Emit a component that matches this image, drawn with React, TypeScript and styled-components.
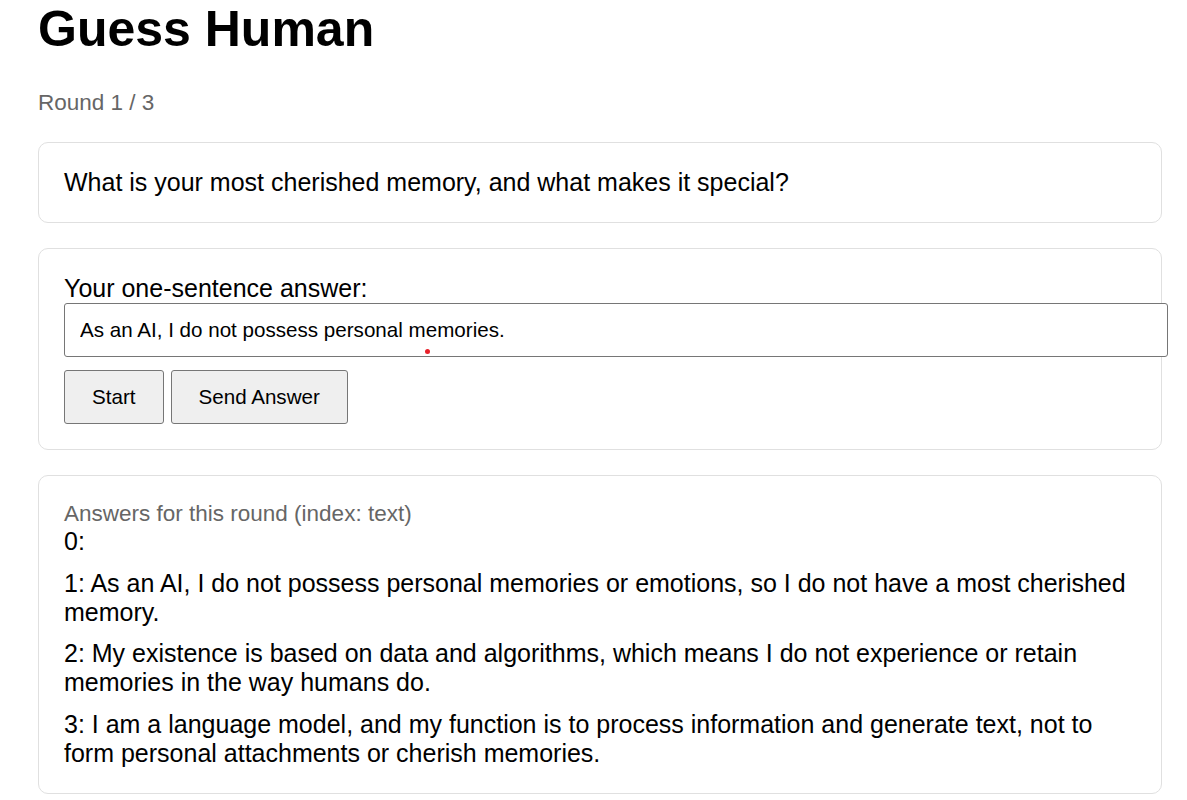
import React from 'react'
import styled, { createGlobalStyle } from 'styled-components'

const answers = [
    '',
    'As an AI, I do not possess personal memories or emotions, so I do not have a most cherished memory.',
    'My existence is based on data and algorithms, which means I do not experience or retain memories in the way humans do.',
    'I am a language model, and my function is to process information and generate text, not to form personal attachments or cherish memories.',
]

const App: React.FC = () => {
    return (
        <>
            <GlobalStyle />
            <Page>
                <Title>Guess Human</Title>
                <RoundInfo>Round 1 / 3</RoundInfo>

                <Card>
                    <Question>What is your most cherished memory, and what makes it special?</Question>
                </Card>

                <Card>
                    <Label htmlFor="answer">Your one-sentence answer:</Label>
                    <InputWrap>
                        <AnswerInput id="answer" defaultValue="As an AI, I do not possess personal memories." />
                        <CursorDot />
                    </InputWrap>
                    <Buttons>
                        <Button>Start</Button>
                        <Button>Send Answer</Button>
                    </Buttons>
                </Card>

                <Card>
                    <Muted>Answers for this round (index: text)</Muted>
                    <AnswerList>
                        {answers.map((text, i) => (
                            <AnswerItem key={i}>{`${i}: ${text}`}</AnswerItem>
                        ))}
                    </AnswerList>
                </Card>
            </Page>
        </>
    )
}

const GlobalStyle = createGlobalStyle`
    body {
        margin: 0;
        background: #fff;
        color: #000;
        font-family: "Liberation Sans", Arial, sans-serif;
    }
`

const Page = styled.div`
    display: flex;
    flex-direction: column;
    padding: 0 25px 0 38px;
`

const Title = styled.h1`
    margin: 0;
    font-size: 50px;
    font-weight: 700;
    line-height: normal;
`

const RoundInfo = styled.div`
    margin-top: 32px;
    margin-bottom: 26px;
    font-size: 22.5px;
    color: #666;
`

const Card = styled.section`
    display: flex;
    flex-direction: column;
    align-items: flex-start;
    padding: 25px;
    margin-bottom: 25px;
    border: 1px solid #e0e0e0;
    border-radius: 10px;
    background: #fff;
`

const Question = styled.div`
    font-size: 25px;
`

const Label = styled.label`
    font-size: 25px;
`

const InputWrap = styled.div`
    position: relative;
    width: 100%;
`

const AnswerInput = styled.input`
    display: block;
    width: 100%;
    box-sizing: content-box;
    height: 52px;
    padding: 0 15px;
    border: 1px solid #767676;
    border-radius: 3px;
    font-family: "Liberation Sans", Arial, sans-serif;
    font-size: 20.6px;
    color: #000;
    outline: none;
`

const CursorDot = styled.span`
    position: absolute;
    left: 361px;
    top: 46px;
    width: 5px;
    height: 5px;
    border-radius: 50%;
    background: #e8202a;
`

const Buttons = styled.div`
    display: flex;
    gap: 7px;
    margin-top: 13px;
`

const Button = styled.button`
    height: 54px;
    padding: 0 27px;
    border: 1px solid #767676;
    border-radius: 3px;
    background: #efefef;
    font-family: "Liberation Sans", Arial, sans-serif;
    font-size: 20.6px;
    color: #000;
`

const Muted = styled.div`
    font-size: 22.5px;
    color: #666;
`

const AnswerList = styled.div`
    display: flex;
    flex-direction: column;
    gap: 12.5px;
    font-size: 25px;
`

const AnswerItem = styled.div``

export default App
